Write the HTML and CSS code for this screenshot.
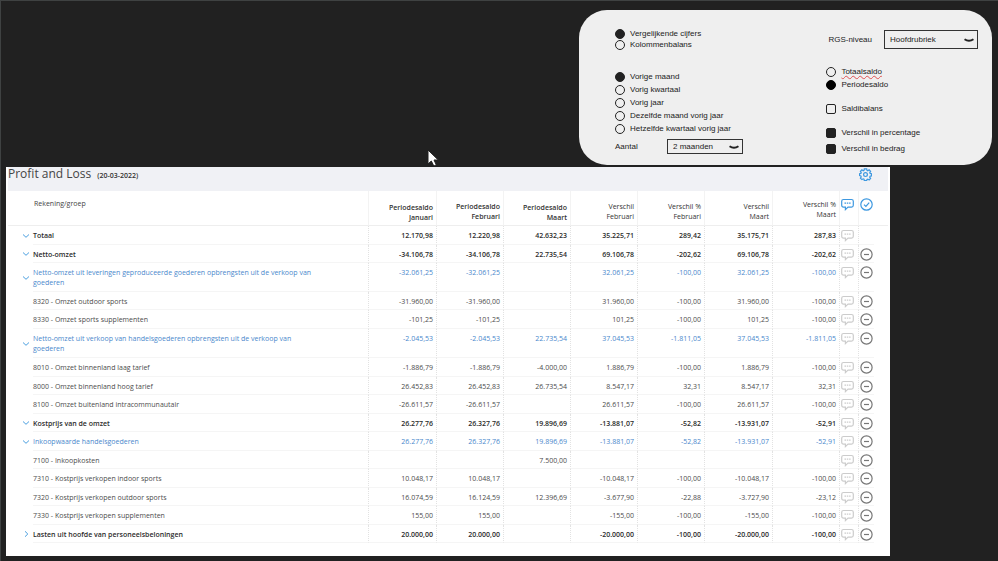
FILE: index.html
```html
<!DOCTYPE html>
<html lang="nl">
<head>
<meta charset="utf-8">
<meta name="viewport" content="width=device-width, initial-scale=1">
<title>Profit and Loss</title>
<link rel="stylesheet" href="styles.css">
</head>
<body>

<svg class="sprite" aria-hidden="true">
  <symbol id="down" viewBox="0 0 8 8"><path d="M1 2.500 4 5.300 7 2.500"/></symbol>
  <symbol id="right" viewBox="0 0 8 8"><path d="M3 1.300 5.800 4 3 6.700"/></symbol>
  <symbol id="note" viewBox="0 0 13 13"><path d="M2.500 1.500h8q1.800 0 1.800 1.800v4q0 1.800-1.800 1.800H7L4.400 11.600V9.100H2.500Q.7 9.100.7 7.300v-4Q.7 1.500 2.500 1.500z"/><path d="M3.500 5.200h1.500M5.800 5.200h1.500M8.100 5.200h1.500"/></symbol>
  <symbol id="minus" viewBox="0 0 13 13"><circle cx="6.500" cy="6.500" r="5.600"/><path d="M4 6.500h5"/></symbol>
  <symbol id="check" viewBox="0 0 13 13"><circle cx="6.500" cy="6.500" r="5.700"/><path d="M4 6.600 5.900 8.400 9.200 4.700"/></symbol>
  <symbol id="gear" viewBox="0 0 13 13"><path d="M5.300.8h2.400l.3 1.500.8.4 1.300-.9 1.500 1.500-.8 1.300.3.800 1.400.300v2.200l-1.400.3-.4.900.9 1.300-1.500 1.500-1.300-.8-.8.300-.3 1.300H5.300L5 11.100l-.8-.3-1.300.8-1.500-1.500.8-1.300-.3-.9-1.400-.3V5.700l1.400-.3.300-.8-.8-1.300 1.500-1.500 1.300.9.800-.4z"/><circle cx="6.500" cy="6.600" r="1.900"/></symbol>
  <symbol id="caret" viewBox="0 0 10 5"><path d="M.5 1.200Q5 4.400 9.500 1.200"/></symbol>
</svg>

<form class="options">
  <div class="col-left">
    <div class="group tight">
      <label><input type="radio" name="soort" checked> Vergelijkende cijfers</label>
      <label><input type="radio" name="soort"> Kolommenbalans</label>
    </div>
    <div class="group periods">
      <label><input type="radio" name="periode" checked> Vorige maand</label>
      <label><input type="radio" name="periode"> Vorig kwartaal</label>
      <label><input type="radio" name="periode"> Vorig jaar</label>
      <label><input type="radio" name="periode"> Dezelfde maand vorig jaar</label>
      <label><input type="radio" name="periode"> Hetzelfde kwartaal vorig jaar</label>
    </div>
    <div class="field count">
      <label for="aantal">Aantal</label>
      <span class="select">
        <select id="aantal"><option>2 maanden</option></select>
        <svg><use href="#caret"/></svg>
      </span>
    </div>
  </div>
  <div class="col-right">
    <div class="field level">
      <label for="niveau">RGS-niveau</label>
      <span class="select">
        <select id="niveau"><option>Hoofdrubriek</option></select>
        <svg><use href="#caret"/></svg>
      </span>
    </div>
    <div class="group saldo">
      <label><input type="radio" name="saldo"> <span class="misspelled">Totaalsaldo</span></label>
      <label class="black"><input type="radio" name="saldo" checked> Periodesaldo</label>
    </div>
    <div class="group">
      <label><input type="checkbox"> Saldibalans</label>
    </div>
    <div class="group differences">
      <label><input type="checkbox" checked> Verschil in percentage</label>
      <label><input type="checkbox" checked> Verschil in bedrag</label>
    </div>
  </div>
</form>

<main class="report">
  <header class="report-head">
    <h1>Profit and Loss <small>(20-03-2022)</small></h1>
    <button type="button" class="icon blue" aria-label="Instellingen"><svg><use href="#gear"/></svg></button>
  </header>

  <table>
    <colgroup>
      <col class="c-toggle"><col><col class="c-wide"><col class="c-num"><col class="c-num"><col class="c-num"><col class="c-num"><col class="c-wide"><col class="c-num"><col class="c-note"><col class="c-act"><col class="c-end">
    </colgroup>
    <thead>
      <tr>
        <th class="toggle"></th>
        <th class="name">Rekening/groep</th>
        <th class="low">Periodesaldo<br>Januari</th>
        <th>Periodesaldo<br>Februari</th>
        <th class="low">Periodesaldo<br>Maart</th>
        <th class="diff">Verschil<br>Februari</th>
        <th class="diff">Verschil %<br>Februari</th>
        <th class="diff">Verschil<br>Maart</th>
        <th class="diff high">Verschil %<br>Maart</th>
        <th class="act"><button type="button" class="icon blue" aria-label="Notities"><svg><use href="#note"/></svg></button></th>
        <th class="act" colspan="2"><button type="button" class="icon blue" aria-label="Akkoord"><svg><use href="#check"/></svg></button></th>
      </tr>
    </thead>
    <tbody>
      <tr class="total">
        <td class="toggle"><button type="button" aria-label="Inklappen"><svg><use href="#down"/></svg></button></td>
        <td class="name">Totaal</td>
        <td>12.170,98</td><td>12.220,98</td><td>42.632,23</td><td>35.225,71</td><td>289,42</td><td>35.175,71</td><td>287,83</td>
        <td class="act"><button type="button" class="icon pale" aria-label="Notitie"><svg><use href="#note"/></svg></button></td>
        <td class="act"></td>
      </tr>
      <tr class="total">
        <td class="toggle"><button type="button" aria-label="Inklappen"><svg><use href="#down"/></svg></button></td>
        <td class="name">Netto-omzet</td>
        <td>-34.106,78</td><td>-34.106,78</td><td>22.735,54</td><td>69.106,78</td><td>-202,62</td><td>69.106,78</td><td>-202,62</td>
        <td class="act"><button type="button" class="icon pale" aria-label="Notitie"><svg><use href="#note"/></svg></button></td>
        <td class="act"><button type="button" class="icon" aria-label="Status"><svg><use href="#minus"/></svg></button></td>
      </tr>
      <tr class="sub">
        <td class="toggle"><button type="button" aria-label="Inklappen"><svg><use href="#down"/></svg></button></td>
        <td class="name">Netto-omzet uit leveringen geproduceerde goederen opbrengsten uit de verkoop van goederen</td>
        <td>-32.061,25</td><td>-32.061,25</td><td></td><td>32.061,25</td><td>-100,00</td><td>32.061,25</td><td>-100,00</td>
        <td class="act"><button type="button" class="icon pale" aria-label="Notitie"><svg><use href="#note"/></svg></button></td>
        <td class="act"><button type="button" class="icon" aria-label="Status"><svg><use href="#minus"/></svg></button></td>
      </tr>
      <tr>
        <td class="toggle"></td>
        <td class="name">8320 - Omzet outdoor sports</td>
        <td>-31.960,00</td><td>-31.960,00</td><td></td><td>31.960,00</td><td>-100,00</td><td>31.960,00</td><td>-100,00</td>
        <td class="act"><button type="button" class="icon pale" aria-label="Notitie"><svg><use href="#note"/></svg></button></td>
        <td class="act"><button type="button" class="icon" aria-label="Status"><svg><use href="#minus"/></svg></button></td>
      </tr>
      <tr>
        <td class="toggle"></td>
        <td class="name">8330 - Omzet sports supplementen</td>
        <td>-101,25</td><td>-101,25</td><td></td><td>101,25</td><td>-100,00</td><td>101,25</td><td>-100,00</td>
        <td class="act"><button type="button" class="icon pale" aria-label="Notitie"><svg><use href="#note"/></svg></button></td>
        <td class="act"><button type="button" class="icon" aria-label="Status"><svg><use href="#minus"/></svg></button></td>
      </tr>
      <tr class="sub">
        <td class="toggle"><button type="button" aria-label="Inklappen"><svg><use href="#down"/></svg></button></td>
        <td class="name">Netto-omzet uit verkoop van handelsgoederen opbrengsten uit de verkoop van goederen</td>
        <td>-2.045,53</td><td>-2.045,53</td><td>22.735,54</td><td>37.045,53</td><td>-1.811,05</td><td>37.045,53</td><td>-1.811,05</td>
        <td class="act"><button type="button" class="icon pale" aria-label="Notitie"><svg><use href="#note"/></svg></button></td>
        <td class="act"><button type="button" class="icon" aria-label="Status"><svg><use href="#minus"/></svg></button></td>
      </tr>
      <tr>
        <td class="toggle"></td>
        <td class="name">8010 - Omzet binnenland laag tarief</td>
        <td>-1.886,79</td><td>-1.886,79</td><td>-4.000,00</td><td>1.886,79</td><td>-100,00</td><td>1.886,79</td><td>-100,00</td>
        <td class="act"><button type="button" class="icon pale" aria-label="Notitie"><svg><use href="#note"/></svg></button></td>
        <td class="act"><button type="button" class="icon" aria-label="Status"><svg><use href="#minus"/></svg></button></td>
      </tr>
      <tr>
        <td class="toggle"></td>
        <td class="name">8000 - Omzet binnenland hoog tarief</td>
        <td>26.452,83</td><td>26.452,83</td><td>26.735,54</td><td>8.547,17</td><td>32,31</td><td>8.547,17</td><td>32,31</td>
        <td class="act"><button type="button" class="icon pale" aria-label="Notitie"><svg><use href="#note"/></svg></button></td>
        <td class="act"><button type="button" class="icon" aria-label="Status"><svg><use href="#minus"/></svg></button></td>
      </tr>
      <tr>
        <td class="toggle"></td>
        <td class="name">8100 - Omzet buitenland intracommunautair</td>
        <td>-26.611,57</td><td>-26.611,57</td><td></td><td>26.611,57</td><td>-100,00</td><td>26.611,57</td><td>-100,00</td>
        <td class="act"><button type="button" class="icon pale" aria-label="Notitie"><svg><use href="#note"/></svg></button></td>
        <td class="act"><button type="button" class="icon" aria-label="Status"><svg><use href="#minus"/></svg></button></td>
      </tr>
      <tr class="total">
        <td class="toggle"><button type="button" aria-label="Inklappen"><svg><use href="#down"/></svg></button></td>
        <td class="name">Kostprijs van de omzet</td>
        <td>26.277,76</td><td>26.327,76</td><td>19.896,69</td><td>-13.881,07</td><td>-52,82</td><td>-13.931,07</td><td>-52,91</td>
        <td class="act"><button type="button" class="icon pale" aria-label="Notitie"><svg><use href="#note"/></svg></button></td>
        <td class="act"><button type="button" class="icon" aria-label="Status"><svg><use href="#minus"/></svg></button></td>
      </tr>
      <tr class="sub">
        <td class="toggle"><button type="button" aria-label="Inklappen"><svg><use href="#down"/></svg></button></td>
        <td class="name">Inkoopwaarde handelsgoederen</td>
        <td>26.277,76</td><td>26.327,76</td><td>19.896,69</td><td>-13.881,07</td><td>-52,82</td><td>-13.931,07</td><td>-52,91</td>
        <td class="act"><button type="button" class="icon pale" aria-label="Notitie"><svg><use href="#note"/></svg></button></td>
        <td class="act"><button type="button" class="icon" aria-label="Status"><svg><use href="#minus"/></svg></button></td>
      </tr>
      <tr>
        <td class="toggle"></td>
        <td class="name">7100 - Inkoopkosten</td>
        <td></td><td></td><td>7.500,00</td><td></td><td></td><td></td><td></td>
        <td class="act"><button type="button" class="icon pale" aria-label="Notitie"><svg><use href="#note"/></svg></button></td>
        <td class="act"><button type="button" class="icon" aria-label="Status"><svg><use href="#minus"/></svg></button></td>
      </tr>
      <tr>
        <td class="toggle"></td>
        <td class="name">7310 - Kostprijs verkopen indoor sports</td>
        <td>10.048,17</td><td>10.048,17</td><td></td><td>-10.048,17</td><td>-100,00</td><td>-10.048,17</td><td>-100,00</td>
        <td class="act"><button type="button" class="icon pale" aria-label="Notitie"><svg><use href="#note"/></svg></button></td>
        <td class="act"><button type="button" class="icon" aria-label="Status"><svg><use href="#minus"/></svg></button></td>
      </tr>
      <tr>
        <td class="toggle"></td>
        <td class="name">7320 - Kostprijs verkopen outdoor sports</td>
        <td>16.074,59</td><td>16.124,59</td><td>12.396,69</td><td>-3.677,90</td><td>-22,88</td><td>-3.727,90</td><td>-23,12</td>
        <td class="act"><button type="button" class="icon pale" aria-label="Notitie"><svg><use href="#note"/></svg></button></td>
        <td class="act"><button type="button" class="icon" aria-label="Status"><svg><use href="#minus"/></svg></button></td>
      </tr>
      <tr>
        <td class="toggle"></td>
        <td class="name">7330 - Kostprijs verkopen supplementen</td>
        <td>155,00</td><td>155,00</td><td></td><td>-155,00</td><td>-100,00</td><td>-155,00</td><td>-100,00</td>
        <td class="act"><button type="button" class="icon pale" aria-label="Notitie"><svg><use href="#note"/></svg></button></td>
        <td class="act"><button type="button" class="icon" aria-label="Status"><svg><use href="#minus"/></svg></button></td>
      </tr>
      <tr class="total">
        <td class="toggle"><button type="button" aria-label="Uitklappen"><svg><use href="#right"/></svg></button></td>
        <td class="name">Lasten uit hoofde van personeelsbeloningen</td>
        <td>20.000,00</td><td>20.000,00</td><td></td><td>-20.000,00</td><td>-100,00</td><td>-20.000,00</td><td>-100,00</td>
        <td class="act"><button type="button" class="icon pale" aria-label="Notitie"><svg><use href="#note"/></svg></button></td>
        <td class="act"><button type="button" class="icon" aria-label="Status"><svg><use href="#minus"/></svg></button></td>
      </tr>
    </tbody>
  </table>
</main>

<svg class="cursor" viewBox="0 0 12 18" aria-hidden="true"><path d="M1 1v14l3.300-3L6.800 17l2.500-1.100L7 11h4.300z"/></svg>

</body>
</html>
```

FILE: styles.css
```css
* {
  box-sizing: border-box;
}

body {
  display: flex;
  flex-direction: column;
  min-height: 100vh;
  margin: 0;
  padding: 9px 6px 5px 5px;
  border-top: 1px solid #3f4242;
  border-left: 1px solid #3f4242;
  background: #212121;
}

button {
  display: block;
  margin: 0;
  padding: 0;
  border: 0;
  background: none;
}

svg {
  display: block;
}

.sprite {
  position: absolute;
  width: 0;
  height: 0;
}

/* options panel */
.options {
  display: flex;
  justify-content: space-between;
  align-self: flex-end;
  width: 413px;
  min-height: 155px;
  padding: 18px 14px 10px 36px;
  border-radius: 28px;
  background: #efefef;
  color: #222;
  font: 8px/12px "Liberation Sans", Arial, sans-serif;
}

.group {
  display: flex;
  flex-direction: column;
}

.group label {
  display: flex;
  align-items: center;
  gap: 5px;
  height: 13px;
}

.tight label {
  height: 11px;
}

.periods {
  margin-top: 20px;
}

.options input {
  flex: none;
  appearance: none;
  width: 10px;
  height: 10px;
  margin: 0;
  border: 1px solid #222;
}

.options input[type=radio] {
  border-radius: 50%;
}

.options input[type=checkbox] {
  border-radius: 2px;
}

.options input:checked {
  background: #222;
}

.options .black input {
  border-color: #000;
  background: #000;
}

.misspelled {
  text-decoration: underline wavy #e05050 1px;
}

.field {
  display: flex;
  align-items: center;
}

.select {
  position: relative;
}

.select svg {
  position: absolute;
  top: 50%;
  right: 4px;
  width: 10px;
  height: 5px;
  margin-top: -2px;
  fill: none;
  stroke: #222;
  stroke-width: 2px;
}

select {
  appearance: none;
  display: block;
  width: 100%;
  height: 100%;
  padding: 0 5px;
  border: 1px solid #333;
  border-radius: 0;
  background: none;
  color: inherit;
  font: inherit;
}

.count {
  justify-content: space-between;
  width: 128px;
  margin-top: 4px;
}

.count .select {
  width: 76px;
  height: 15px;
}

.level {
  gap: 12px;
  margin-top: 2px;
}

.level .select {
  width: 94px;
  height: 19px;
}

.col-right .group {
  margin-left: -2px;
}

.col-right .saldo {
  margin: 16px 0 11px -2px;
}

.differences {
  gap: 3px;
  margin-top: 11px;
}

/* report */
.report {
  flex: 1;
  margin: 2px 102px 0 0;
  padding: 0 2px;
  background: #fff;
  color: #4c4c4c;
  font: 7px/10px "Open Sans", sans-serif;
}

.report-head {
  display: flex;
  align-items: flex-start;
  justify-content: space-between;
  height: 24px;
  padding: 0 16px 0 0;
  background: #f0f1f5;
}

.report-head .icon {
  margin-top: 1px;
}

h1 {
  margin: 0;
  color: #444;
  font-size: 12px;
  font-weight: 400;
  line-height: 14px;
}

h1 small {
  margin-left: 3px;
  color: #333;
  font-size: 7px;
  font-weight: 600;
}

table {
  width: 100%;
  table-layout: fixed;
  border-spacing: 0;
}

.c-toggle { width: 25px; }
.c-num { width: 67px; }
.c-wide { width: 68px; }
.c-note { width: 19px; }
.c-act { width: 15px; }
.c-end { width: 14px; }

th,
td {
  padding: 5px 3px 0 0;
  border-right: 1px dotted #e2e2e2;
  border-bottom: 1px solid #f5f5f5;
  text-align: right;
  vertical-align: top;
}

th {
  height: 35px;
  padding: 11px 3px 0 0;
  border-right: 1px solid #f3f3f3;
  border-bottom-color: #eee;
  color: #333;
  font-weight: 600;
}

th.low {
  padding-top: 12px;
}

th.diff {
  font-weight: 500;
}

th.high {
  padding-top: 9px;
}

th.name {
  padding-top: 8px;
  padding-left: 1px;
  color: #444;
  font-weight: 400;
}

tbody tr {
  height: 18px;
}

tbody tr:nth-child(odd) {
  height: 19px;
}

tbody .sub:nth-child(3),
tbody .sub:nth-child(6) {
  height: 29px;
}

.name {
  padding-right: 45px;
  text-align: left;
}

.toggle {
  padding: 0 0 0 14px;
  border-right: 0;
  vertical-align: middle;
}

td.toggle {
  border-bottom: 0;
}

.toggle svg {
  width: 8px;
  height: 8px;
  fill: none;
  stroke: #4a9fe0;
}

.total {
  color: #2c2c2c;
  font-weight: 600;
}

.sub {
  color: #4a88cc;
}

.act {
  padding: 3px 0 0 1px;
}

th.act {
  padding-top: 7px;
}

th:last-child,
td:last-child {
  border-right: 0;
}

.icon svg {
  width: 13px;
  height: 13px;
  fill: none;
  stroke: #777;
  stroke-width: 1.2;
}

.icon.blue svg {
  stroke: #3d98e0;
}

.icon.pale svg {
  stroke: #ccc;
}

.cursor {
  position: absolute;
  top: 149px;
  left: 427px;
  width: 12px;
  height: 18px;
  fill: #fff;
  stroke: #222;
}
```
